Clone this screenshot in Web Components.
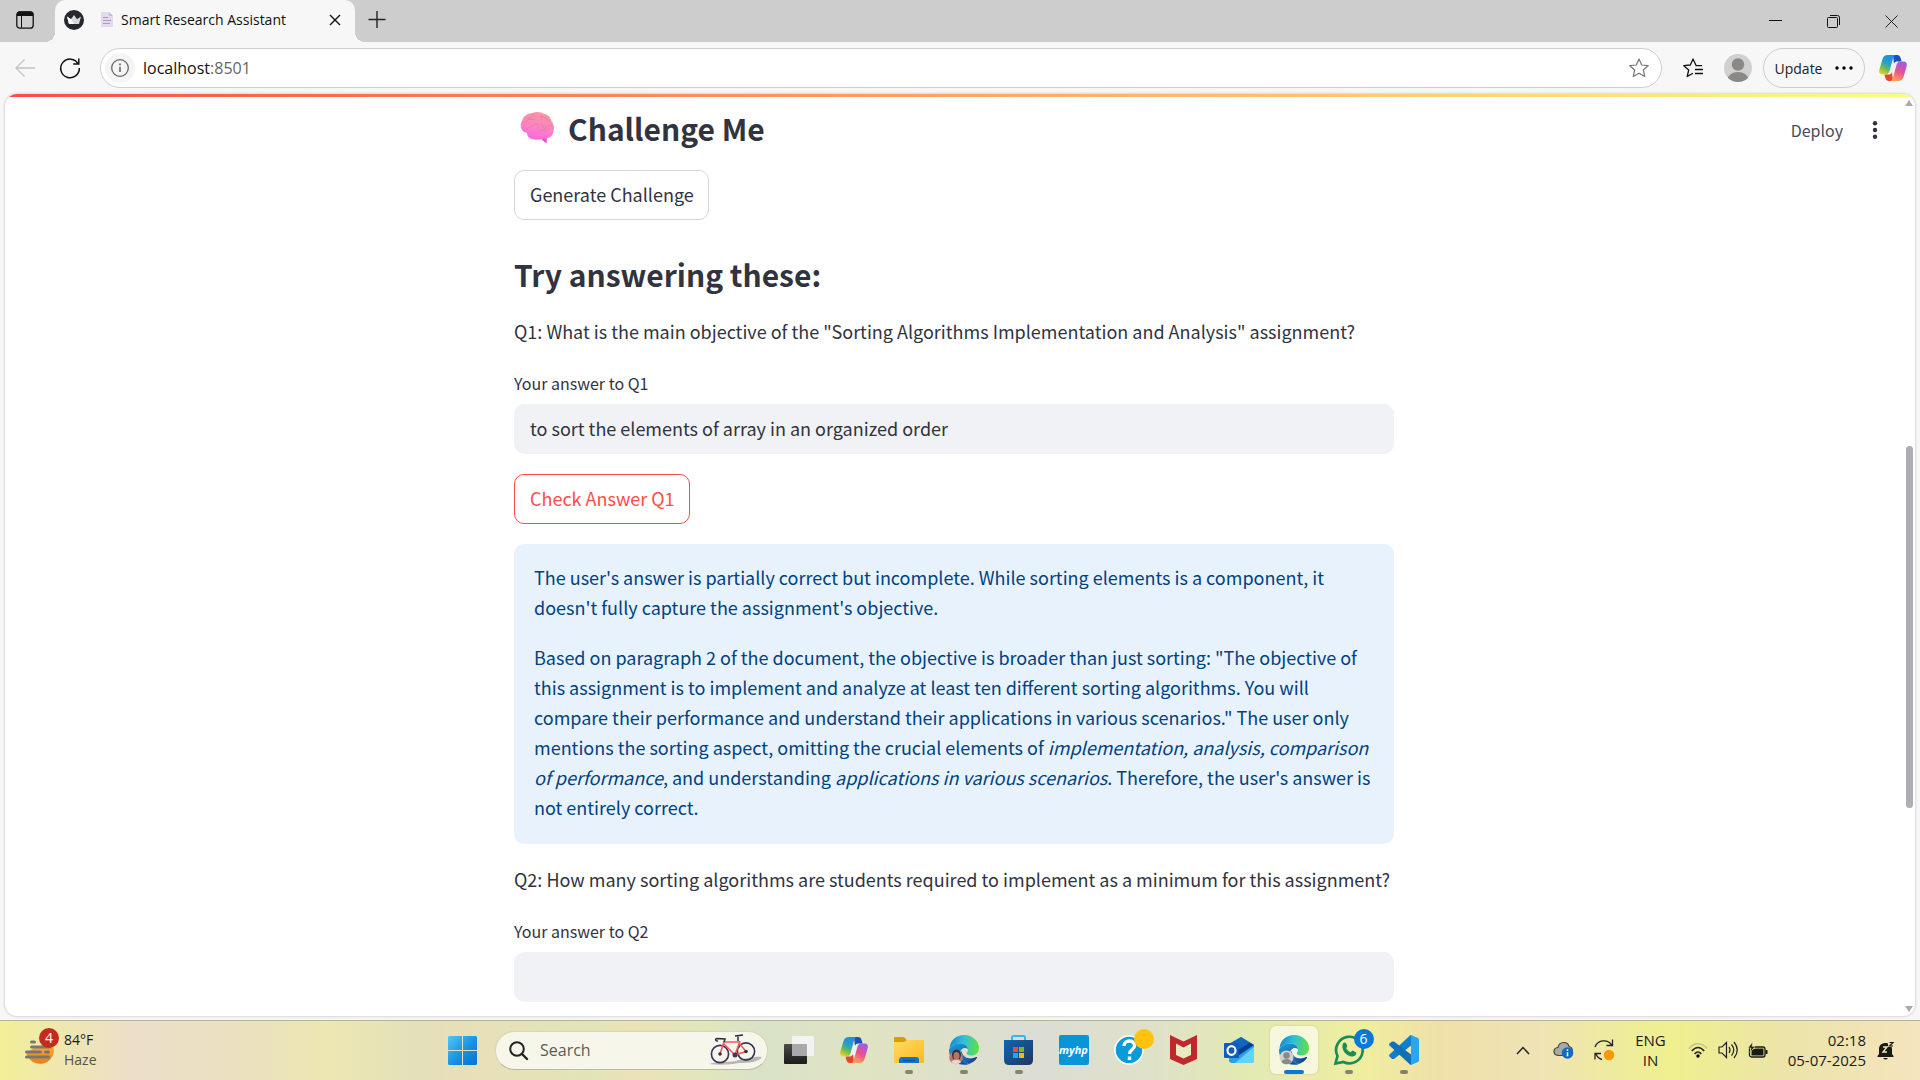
<!DOCTYPE html>
<html lang="en">
<head>
<meta charset="utf-8">
<title>Smart Research Assistant</title>
<style>
  html, body { height: 100%; margin: 0; }
  body { font-family: "Open Sans", "Noto Sans", sans-serif; font-size: 14px; color: #1b1b1b; overflow: hidden; }
</style>
</head>
<body>
<desk-top></desk-top>

<script>
const define = (name, html, setup) => {
  const template = document.createElement('template');
  template.innerHTML = html;
  customElements.define(name, class extends HTMLElement {
    connectedCallback() {
      if (this.shadowRoot) return;
      const root = this.attachShadow({ mode: 'open' });
      root.append(template.content.cloneNode(true));
      if (setup) setup(this, root);
    }
  });
};

const edgeArt = `
  <defs>
    <linearGradient id="a" x1="0" y1=".5" x2="1" y2=".6"><stop offset="0" stop-color="#1a86d0"/><stop offset=".45" stop-color="#2fc0d8"/><stop offset="1" stop-color="#62e23c"/></linearGradient>
    <linearGradient id="b" x1="0" y1="0" x2=".4" y2="1"><stop offset="0" stop-color="#1ba0dc"/><stop offset="1" stop-color="#0d55a8"/></linearGradient>
    <linearGradient id="c" x1="0" y1="0" x2="1" y2="0"><stop offset="0" stop-color="#1d78c8"/><stop offset="1" stop-color="#12397c"/></linearGradient>
  </defs>
  <path fill="url(#a)" d="M.5 13C1.5 5 7.500 0 15 0c8.500 0 15 6 15 13 0 5-4 8-8.500 7.500-2.500-.2-3.900-1.200-3.700-2.500C18.200 17 19 16.300 19 14.500c0-3.500-3-6-7.500-6-5 0-9 2-11 4.500z"/>
  <path fill="url(#b)" d="M.3 14C2 10.500 6 8.500 11.500 8.500c4 0 7.500 2.500 7.500 6-1.500-2.700-7.500-2-8 3.500-.3 5 4 10 9 11C12 32 0 27 0 15z"/>
  <path fill="url(#c)" d="M11 18c-.3 5 4 10 9 11 3.500-1.200 6.500-3.600 8-6.200.3-.6-.2-1-.8-.7-5.200 2.400-13.200 1.900-14.400-5.600-1-.5-1.600.5-1.800 1.500z"/>`;

const icons = {
  panel: [18, 18, `<rect x=".8" y=".8" width="16.400" height="16.400" rx="3" fill="none" stroke="#111" stroke-width="1.300"/><path d="M1 5V3a2.500 2.500 0 0 1 2.500-2.500h11A2.500 2.500 0 0 1 17 3v2z" fill="#111"/><path d="M5.500 5v12" stroke="#111"/>`],
  crown: [20, 20, `<circle cx="10" cy="10" r="10" fill="#262730"/><path fill="#d8d8da" d="M3 6.500l4 2.700L10 5l3 4.200 4-2.700-2 7.500H5z"/><path fill="#fff" d="M3 6.500l4 2.700 3 4.800H5z"/>`],
  page: [12, 15, `<path fill="#e3daf0" d="M0 0h8l4 4v11H0z"/><path fill="#c9b8de" d="M8 0l4 4H8z"/><path d="M2 5.500h5M2 8.500h8M2 11.500h7" stroke="#a99bbb"/>`],
  close: [12, 12, `<path d="M1 1l10 10M11 1L1 11" stroke="#111" stroke-width="1.400"/>`],
  plus: [18, 18, `<path d="M9 0v17M.5 8.500h17" stroke="#222" stroke-width="1.400"/>`],
  minimise: [13, 13, `<path d="M0 5.500h13" stroke="#111"/>`],
  restore: [13, 13, `<rect x=".5" y="2.500" width="10" height="10" rx="1" fill="none" stroke="#111"/><path d="M3 .5h7.500a2 2 0 0 1 2 2V10" fill="none" stroke="#111"/>`],
  shut: [13, 13, `<path d="M.5.5l12 12M12.500.5l-12 12" stroke="#222"/>`],
  back: [20, 18, `<path d="M20 9H1M9.500.500L1 9l8.500 8.500" fill="none" stroke="#c4c4c4" stroke-width="1.300"/>`],
  reload: [20, 20, `<path d="M18.200 6A9.300 9.300 0 1 0 19.300 10M18.800.500V6h-5.600" fill="none" stroke="#111" stroke-width="1.500"/>`],
  info: [18, 18, `<circle cx="9" cy="9" r="8.300" fill="none" stroke="#666" stroke-width="1.300"/><path d="M9 7.800V13M9 4.500v1.700" stroke="#666" stroke-width="1.600"/>`],
  star: [20, 20, `<path d="M10 1l2.700 6 6.500.7-4.900 4.300 1.500 6.500L10 15.200l-5.800 3.300 1.500-6.500L.8 7.700 7.300 7z" fill="none" stroke="#777" stroke-width="1.200" stroke-linejoin="round"/>`],
  favourites: [20, 20, `<path d="M19 7.700h-5.800L10 1 7.300 7l-6.500.7 4.900 4.300-1.500 6.500 5.800-3.300M12 11.500h8M12 15.500h8" fill="none" stroke="#111" stroke-width="1.300" stroke-linejoin="round"/>`],
  person: [28, 28, `<clipPath id="p"><circle cx="14" cy="14" r="14"/></clipPath><g clip-path="url(#p)"><path fill="#d2d0ce" d="M0 0h28v28H0z"/><circle cx="14" cy="10.500" r="6.200" fill="#8a8886"/><ellipse cx="14" cy="26" rx="10.500" ry="8" fill="#8a8886"/></g>`],
  dots: [18, 4, `<circle cx="2" cy="2" r="1.700"/><circle cx="9" cy="2" r="1.700"/><circle cx="16" cy="2" r="1.700"/>`],
  kebab: [6, 18, `<g fill="#31333f"><circle cx="3" cy="2.300" r="2.200"/><circle cx="3" cy="9" r="2.200"/><circle cx="3" cy="15.700" r="2.200"/></g>`],
  copilot: [28, 26, `
    <defs><linearGradient id="l" x1=".6" y1="0" x2=".2" y2="1"><stop offset="0" stop-color="#1a8fe8"/><stop offset=".4" stop-color="#2aa0c8"/><stop offset=".68" stop-color="#67bd55"/><stop offset="1" stop-color="#f3d521"/></linearGradient>
    <linearGradient id="r" x1=".7" y1="0" x2=".3" y2="1"><stop offset="0" stop-color="#9b5cf0"/><stop offset=".5" stop-color="#e9508f"/><stop offset="1" stop-color="#ffa15a"/></linearGradient></defs>
    <path fill="#f4f2ee" d="M13 8h4.500L14.500 18H10z"/>
    <path fill="#1c4fc4" d="M14 0h4c2 0 3 1 3.600 3l1 3.500h-4c-2 0-3 .5-3.600 2.500z"/>
    <path fill="#e8442d" d="M14 26h-4c-2 0-3-1-3.600-3l-1-3.500h4c2 0 3-.5 3.600-2.500z"/>
    <path fill="url(#l)" d="M9 0h7.500c-1.500.5-2 1.800-2.500 3.500L10.800 15c-1 3.500-2 4.500-4.300 4.500H4c-3.300 0-4.500-2-3.600-5L3.500 4C4.300 1.300 6 0 9 0z"/>
    <path fill="url(#r)" d="M19 26h-7.500c1.500-.5 2-1.800 2.500-3.500L17.200 11c1-3.500 2-4.500 4.300-4.500H24c3.300 0 4.500 2 3.600 5L24.500 22c-.8 2.700-2.500 4-5.500 4z"/>`],
  brain: [34, 32, `
    <defs><linearGradient id="g" x1=".7" y1="0" x2=".4" y2="1"><stop offset="0" stop-color="#f797a4"/><stop offset=".5" stop-color="#fb86bd"/><stop offset="1" stop-color="#fc68e4"/></linearGradient></defs>
    <path fill="#e850c8" d="M20 24l7 0-.5 7.500C23 29 21 27 20 24z"/>
    <path fill="url(#g)" d="M4 20C0 17 0 12 2 9 3 4 8 1 13 1c3-2 9-1 11 1 4 0 7 4 7.500 7 3 4 3 9 1.500 12-1 4-5 6-9 5.500-3 1.500-9 1.500-12 .5-3-.5-5-3-5-6z"/>
    <g fill="none" stroke="#e57aa8" stroke-width=".9" stroke-linecap="round"><path d="M3 10c3 0 5-1 6-4 2 0 4-1 4-4M9 6c1 2 3 2 5 1M6 19c1-3 4-4 7-5 1-2 4-3 6-1M22 8l-1-4c3 1 6 2 7 5M20 19c3 0 5-2 6-4s4-2 6-1M22 12c1 2 1 3 1 3s3 3 3 5"/></g>`],
  haze: [30, 26, `
    <defs><linearGradient id="h" x1="0" y1="0" x2="0" y2="1"><stop offset="0" stop-color="#fbb62f"/><stop offset="1" stop-color="#ef7a1a"/></linearGradient></defs>
    <path fill="url(#h)" d="M8 9.500L24 4c3 1 5 4 5 7a14 14 0 0 1-27.500 3.500z"/><g stroke="#777" stroke-width="3" stroke-linecap="round"><path d="M6.500 3h3M6.500 8h18M1.500 13h14M20.500 13h3M1.500 18h22"/></g>`],
  start: [29, 29, `
    <defs><linearGradient id="w" x1="0" y1="0" x2="1" y2="1"><stop offset="0" stop-color="#4cc9fb"/><stop offset=".55" stop-color="#1690e2"/><stop offset="1" stop-color="#0573d2"/></linearGradient></defs>
    <path fill="url(#w)" d="M1 0h13v14H0V1zM15 0h13l1 1v13H15zM0 15h14v14H1l-1-1zM15 15h14v13l-1 1H15z"/>`],
  search: [19, 19, `<circle cx="8" cy="8" r="6.800" fill="none" stroke="#222" stroke-width="2"/><path d="M13 13l5 5" stroke="#222" stroke-width="2.400" stroke-linecap="round"/>`],
  bike: [54, 32, `
    <path fill="#a9a9a3" opacity=".8" d="M0 30c10-3 22-1 30-4 8-2 16-4 23-3-3 5-13 6-23 6-10 2-20 2-30 1z"/>
    <g fill="none"><g stroke="#34345c" stroke-width="1.600"><circle cx="11" cy="20" r="8.600"/><circle cx="37" cy="17.500" r="8.600"/></g>
    <g stroke="#ee5a62" stroke-width="1.600"><path d="M11 20l4-12M14 8h16M14 9l12 12 5-14M26 21l11-3.500-7-8.500"/></g>
    <path d="M29 7V2M26 2l8-1M15 8l1-3-8-.5c-2 0-2 3 1 2.500" stroke="#2b2b44" stroke-width="1.500"/><circle cx="26" cy="21" r="2.500" fill="#463a5a"/></g>
    <circle cx="11" cy="20" r="1.800" fill="#333"/><circle cx="37" cy="17.500" r="1.800" fill="#333"/>`],
  taskview: [30, 28, `
    <defs><linearGradient id="d" x1="0" y1="0" x2="0" y2="1"><stop offset="0" stop-color="#4b4b49"/><stop offset="1" stop-color="#1b1b1b"/></linearGradient></defs>
    <rect y="8" width="23" height="20" rx="1" fill="url(#d)"/><rect x="8" width="22" height="20" rx="1" fill="#f4f4f6" opacity=".92"/><path fill="#a9a9a9" d="M8 8h15v12H8z"/>`],
  folder: [30, 28, `
    <defs><linearGradient id="f" x1="0" y1="0" x2="1" y2="1"><stop offset="0" stop-color="#ffdb67"/><stop offset="1" stop-color="#fcb91c"/></linearGradient></defs>
    <path fill="#dc9a08" d="M0 2q0-1 1-1h8q1.500 0 2.500 1.500L13 5v5H0z"/><path fill="url(#f)" d="M0 6h10l3-2h17v22q0 1-1 1H1q-1 0-1-1z"/><path fill="#1173cc" d="M5 27v-3q0-3 3-3h14q3 0 3 3v3z"/><path d="M9 24.500h12" stroke="#064e94"/>`],
  edgephoto: [30, 30, edgeArt + `<circle cx="7" cy="22.500" r="6.800" fill="#c2727a"/><path fill="#35303a" d="M3 20c0-7 9-7 9 0l-1 4H4z"/><ellipse cx="7.500" cy="21" rx="3" ry="4" fill="#b07a5c"/><path fill="#e5d7cb" d="M2 27c3-3 8-3 10 0-3 3-7 3-10 0z"/>`],
  edgeuser: [30, 30, edgeArt + `<circle cx="7.500" cy="22.500" r="7" fill="#d2d0ce"/><circle cx="7.500" cy="20.500" r="3.200" fill="#8a8886"/><path fill="#8a8886" d="M2.500 27c1-4 9-4 10 0-3 3-7 3-10 0z"/>`],
  store: [29, 30, `
    <defs><linearGradient id="s" x1="0" y1="0" x2="1" y2="1"><stop offset="0" stop-color="#0c66b8"/><stop offset="1" stop-color="#22365c"/></linearGradient></defs>
    <path d="M8 6V2.500Q8 1 9.500 1h10Q21 1 21 2.500V6" fill="none" stroke="#36b8ee" stroke-width="2"/><path fill="url(#s)" d="M0 5h29v20q0 5-5 5H5q-5 0-5-5z"/>
    <path fill="#f25022" d="M9 12h5v5H9z"/><path fill="#7fba00" d="M15 12h5v5h-5z"/><path fill="#22a6f0" d="M9 18h5v5H9z"/><path fill="#ffb900" d="M15 18h5v5h-5z"/>`],
  help: [30, 30, `<circle cx="15" cy="15" r="14" fill="#0d9ad8" stroke="#fff" stroke-width="1.500"/><path d="M10 11c0-6.500 10.500-6.500 10.500-.5 0 4-5 4-5 8.500M15.500 21.500v3.500" fill="none" stroke="#fff" stroke-width="3.400"/>`],
  mcafee: [27, 30, `<path fill="#c1272d" d="M0 0l13.500 6.500L27 0v24l-13.500 6L0 24z"/><path fill="#e9ecc0" d="M6 8.500l7.500 4 7.500-4V20l-7.500 3.500L6 20z"/>`],
  outlook: [30, 28, `
    <path fill="#2aa0ea" d="M5 8l12-7 13 8v15q0 3-3 3H8q-3 0-3-3z"/><path fill="#1366c0" d="M5 8l12-7 9 5.500L10 17z"/><path fill="#0a3f8f" d="M30 9L14 20l-2-5 14-8.500z"/><path fill="#61d4fa" d="M30 11v13q0 3-3 3H11z"/><rect y="7" width="15" height="15" rx="1" fill="#0d5dbd"/><ellipse cx="7.500" cy="14.500" rx="4" ry="4.300" fill="none" stroke="#fff" stroke-width="2.200"/>`],
  whatsapp: [30, 30, `<path d="M1.500 28.500l2-7.500A13.300 13.300 0 1 1 9.500 27z" fill="none" stroke="#1f8a55" stroke-width="2.700"/><path fill="#1f8a55" d="M9 8.500c1-1.500 2.500-1.500 3.200 0l1.200 2.800-1.200 2c1 2 2.400 3.200 4.400 4l1.900-1.800 3.300 1.700c1 .8.500 2.600-1.200 3.800C14.500 23.500 6 15.500 9 8.500z"/>`],
  vscode: [30, 30, `<path fill="#0f7fc9" d="M22 0l2 9L5 24l-2 0-2.500-2.500q-1-1 0-2L21 .5z"/><path fill="#1070b8" d="M22 30l2-9L5 6.500H3L.5 8.500q-1 1 0 2L21 29.500z"/><path fill="#2aa5f0" d="M22 0l7 3q1 .5 1 1.500v21q0 1-1 1.500l-7 3z"/>`],
  chevron: [14, 9, `<path d="M1 8l6-6.500L13 8" fill="none" stroke="#222" stroke-width="1.500"/>`],
  cloud: [21, 18, `<path d="M6 14.500c-6.500 0-6.500-7.500-1-8C6 0 15 0 16 5.500c5 1 4 9-1 9z" fill="#a9a9a9" stroke="#444" stroke-width="1.200"/><circle cx="14.500" cy="12" r="5.800" fill="#0f6cbd"/><path d="M14.500 11.300v4M14.500 8.200V10" stroke="#fff" stroke-width="1.500"/>`],
  sync: [22, 22, `<path d="M2 8A9.500 9.500 0 0 1 19 6.500M19.500.5v6h-6M9 20.500A9 9 0 0 1 3 15M2 20.500v-6h6" fill="none" stroke="#222" stroke-width="1.300"/><circle cx="16" cy="16" r="5.200" fill="#ff9800"/>`],
  wifi: [20, 16, `<path d="M1 6.500c5-6.500 13-6.500 18 0" fill="none" stroke="#c6c389" stroke-width="1.500"/><path d="M3.800 9c4-4.800 8.400-4.800 12.400 0M6.600 12c2.300-2.600 4.500-2.600 6.800 0" fill="none" stroke="#222" stroke-width="1.500"/><circle cx="10" cy="14" r="1.700"/>`],
  volume: [20, 18, `<path d="M1 6h3l4.500-4.500v15L4 12H1zM11 6q2 3 0 6M13.500 3.500q4.500 5.500 0 11M16 1q6.500 8 0 16" fill="none" stroke="#222" stroke-width="1.200"/>`],
  battery: [20, 16, `<rect x="1.500" y="5" width="15.500" height="10" rx="2" fill="none" stroke="#1a1a14" stroke-width="1.300"/><path fill="#1a1a14" d="M3.500 13.500V8l4-1.500h8v7zM17.500 8h2v4h-2z"/><path fill="#1a1a14" stroke="#e9e59a" stroke-width=".6" d="M4.500 0L0 6h3L2 10.500 7 4.500H4z"/>`],
  bell: [17, 19, `<path fill="#1a1a14" d="M2 8c0-8 13-8 13 0v5l1.500 2v1H.5v-1L2 13zM6 17h5q-2.500 3-5 0z"/><path d="M6 6h4l-4 5h4" fill="none" stroke="#efe4b8" stroke-width="1.400"/><path fill="#efe4b8" d="M11 0h6v6h-6z"/><path d="M12.500 1.500H16l-3.500 3.500H16" fill="none" stroke="#1a1a14" stroke-width="1.200"/>`]
};

define('ui-icon', `
  <style>:host { display: block; flex: none; } svg { display: block; overflow: visible; }</style>`,
  (host, root) => {
    const [w, h, art] = icons[host.getAttribute('name')];
    root.innerHTML += `<svg width="${w}" height="${h}" viewBox="0 0 ${w} ${h}" aria-hidden="true">${art}</svg>`;
  });

define('tab-strip', `
  <style>
    :host { display: flex; height: 42px; background: #cdcdcd; align-items: stretch; }
    button { border: 0; background: none; padding: 0; display: flex; align-items: center; justify-content: center; }
    .panel { width: 50px; padding-bottom: 2px; }
    .tab { display: flex; align-items: center; box-sizing: border-box; width: 300px; margin-left: 5px; padding: 0 14px 3px 9px; background: #f7f7f7; border-radius: 10px 10px 0 0; position: relative; }
    .tab::before, .tab::after { content: ""; position: absolute; bottom: 0; width: 10px; height: 10px; }
    .tab::before { right: 100%; background: radial-gradient(circle at 0 0, transparent 10px, #f7f7f7 10px); }
    .tab::after { left: 100%; background: radial-gradient(circle at 100% 0, transparent 10px, #f7f7f7 10px); }
    .page { margin-left: 17px; }
    .title { flex: 1; margin-left: 8px; white-space: nowrap; color: #111; }
    .new { width: 44px; padding-bottom: 2px; }
    .window { display: flex; margin-left: auto; }
    .window button { width: 58px; }
  </style>
  <button class="panel" aria-label="Tab actions"><ui-icon name="panel"></ui-icon></button>
  <div class="tab">
    <ui-icon name="crown"></ui-icon><ui-icon class="page" name="page"></ui-icon>
    <span class="title"><slot></slot></span>
    <button aria-label="Close tab"><ui-icon name="close"></ui-icon></button>
  </div>
  <button class="new" aria-label="New tab"><ui-icon name="plus"></ui-icon></button>
  <div class="window">
    <button aria-label="Minimise"><ui-icon name="minimise"></ui-icon></button>
    <button aria-label="Restore"><ui-icon name="restore"></ui-icon></button>
    <button aria-label="Close"><ui-icon name="shut"></ui-icon></button>
  </div>`);

define('address-bar', `
  <style>
    :host { display: flex; align-items: center; height: 52px; box-sizing: border-box; padding: 0 13px 0 15px; background: #f7f7f7; }
    button { border: 0; background: none; padding: 0; display: flex; align-items: center; justify-content: center; font: inherit; color: #222; }
    .reload { margin: 0 20px 0 25px; }
    .field { display: flex; align-items: center; flex: 1; height: 40px; box-sizing: border-box; border: 1px solid #cfcfcf; border-radius: 20px; background: #fff; padding: 0 12px 0 4px; }
    .info { width: 30px; height: 30px; border-radius: 50%; background: #f4f4f4; }
    .url { flex: 1; margin-left: 8px; font-size: 16px; line-height: 24px; color: #111; }
    .url span { color: #666; }
    .favourites { margin: 0 21px; }
    .update { width: 102px; height: 40px; box-sizing: border-box; border: 1px solid #cdcdcd; border-radius: 20px; gap: 13px; margin: 0 14px 0 11px; }
  </style>
  <button aria-label="Back"><ui-icon name="back"></ui-icon></button>
  <button class="reload" aria-label="Reload"><ui-icon name="reload"></ui-icon></button>
  <div class="field">
    <button class="info" aria-label="Site information"><ui-icon name="info"></ui-icon></button>
    <div class="url">localhost<span>:8501</span></div>
    <button aria-label="Add to favourites"><ui-icon name="star"></ui-icon></button>
  </div>
  <button class="favourites" aria-label="Favourites"><ui-icon name="favourites"></ui-icon></button>
  <button aria-label="Profile"><ui-icon name="person"></ui-icon></button>
  <button class="update">Update <ui-icon name="dots"></ui-icon></button>
  <button aria-label="Copilot"><ui-icon name="copilot"></ui-icon></button>`);

define('scroll-bar', `
  <style>
    :host { display: flex; flex-direction: column; align-items: center; width: 12px; box-sizing: border-box; padding: 6px 0 4px; }
    .up, .down { border: 4px solid transparent; }
    .up { border-bottom: 6px solid #aaa; border-top: 0; }
    .down { border-top: 6px solid #aaa; border-bottom: 0; }
    .before { flex: 340; } .thumb { flex: 362; width: 7px; border-radius: 4px; background: #adadb3; } .after { flex: 198; }
  </style>
  <div class="up"></div><div class="before"></div><div class="thumb"></div><div class="after"></div><div class="down"></div>`);

define('action-button', `
  <style>
    :host { display: block; }
    button { font: inherit; line-height: 30px; height: 50px; padding: 0 14px 2px 15px; border: 1px solid #d6d6d9; border-radius: 10px; background: #fff; color: inherit; }
    :host([active]) button { border-color: #ff4b4b; color: #ff4b4b; }
  </style>
  <button><slot></slot></button>`);

define('section-title', `
  <style>
    :host { display: block; }
    h3 { display: flex; align-items: center; gap: 14px; margin: 0; padding-bottom: 1px; font-size: 30px; line-height: 42px; font-weight: 700; }
    ::slotted(ui-icon) { margin-left: 6px; }
  </style>
  <h3><slot name="icon"></slot><span><slot></slot></span></h3>`);

define('answer-field', `
  <style>
    :host { display: flex; flex-direction: column; gap: 6px; }
    label { font-size: 16px; line-height: 30px; }
    input { font: inherit; color: inherit; height: 50px; box-sizing: border-box; width: 100%; border: 0; border-radius: 10px; background: #f0f2f6; padding: 0 16px 2px; }
  </style>
  <label for="answer"></label><input id="answer" type="text">`,
  (host, root) => {
    root.querySelector('label').textContent = host.getAttribute('label');
    root.querySelector('input').value = host.getAttribute('value') || '';
  });

define('info-alert', `
  <style>
    :host { display: flex; flex-direction: column; gap: 20px; padding: 18px 20px 22px; border-radius: 10px; background: #e8f2fc; color: #004280; }
    ::slotted(p) { margin: 0; }
  </style>
  <slot></slot>`);

define('challenge-page', `
  <style>
    :host { display: flex; position: relative; flex: 1; min-height: 0; margin: 0 5px 4px; overflow: hidden; background: #fff; border-radius: 12px; box-shadow: 0 0 3px rgba(0,0,0,.25);
      font-family: "Noto Sans CJK SC", "Noto Sans", sans-serif; font-size: 18px; line-height: 30px; color: #31333f; }
    .accent { position: absolute; inset: 0 0 auto; height: 3px; background: linear-gradient(90deg, #ff4b4b, #fffd80); }
    .tools { position: absolute; top: 21px; right: 37px; display: flex; align-items: center; gap: 29px; }
    .tools button { border: 0; background: none; padding: 0; font: inherit; font-size: 16px; color: #4a4c57; }
    main { flex: 1; display: flex; flex-direction: column; align-items: center; overflow: hidden; }
    .column { width: 880px; display: flex; flex-direction: column; flex: none; gap: 20px; padding-top: 13px; }
    p { margin: 0; }
    .lead { margin-top: 13px; }
    .question { display: flex; flex-direction: column; gap: 22px; }
  </style>
  <div class="accent"></div>
  <main>
    <div class="column">
      <section-title><ui-icon slot="icon" name="brain"></ui-icon>Challenge Me</section-title>
      <action-button>Generate Challenge</action-button>
      <section-title class="lead">Try answering these:</section-title>
      <div class="question">
        <p>Q1: What is the main objective of the "Sorting Algorithms Implementation and Analysis" assignment?</p>
        <answer-field label="Your answer to Q1" value="to sort the elements of array in an organized order"></answer-field>
      </div>
      <action-button active>Check Answer Q1</action-button>
      <info-alert>
        <p>The user's answer is partially correct but incomplete. While sorting elements is a component, it doesn't fully capture the assignment's objective.</p>
        <p>Based on paragraph 2 of the document, the objective is broader than just sorting: "The objective of this assignment is to implement and analyze at least ten different sorting algorithms. You will compare their performance and understand their applications in various scenarios." The user only mentions the sorting aspect, omitting the crucial elements of <em>implementation, analysis, comparison of performance</em>, and understanding <em>applications in various scenarios</em>. Therefore, the user's answer is not entirely correct.</p>
      </info-alert>
      <div class="question">
        <p>Q2: How many sorting algorithms are students required to implement as a minimum for this assignment?</p>
        <answer-field label="Your answer to Q2"></answer-field>
      </div>
    </div>
  </main>
  <div class="tools"><button>Deploy</button><button aria-label="Main menu"><ui-icon name="kebab"></ui-icon></button></div>
  <scroll-bar></scroll-bar>`);

define('task-item', `
  <style>
    :host { display: flex; width: 55px; height: 60px; align-items: center; justify-content: center; }
    button { position: relative; width: 48px; height: 48px; border: 0; border-radius: 6px; padding: 0; background: none; display: flex; align-items: center; justify-content: center; }
    :host([active]) button { background: rgba(255,255,255,.6); box-shadow: 0 0 2px rgba(0,0,0,.2); }
    :host([running]) button::after { content: ""; position: absolute; bottom: 0; left: 20px; width: 8px; height: 4px; border-radius: 2px; background: #85846a; }
    :host([active]) button::after { left: 14px; width: 20px; background: #0a78d8; }
    .badge { position: absolute; top: 3px; right: -1px; width: 20px; height: 20px; border-radius: 50%; background: #0a78d8; color: #fff; font: 14px/20px "Open Sans", sans-serif; text-align: center; }
    .badge:empty { background: #ffc20e; }
    .hp { width: 30px; height: 30px; border-radius: 2px; background: #0a96d6; color: #fff; font: italic 700 11px/30px "Open Sans", sans-serif; }
  </style>
  <button></button>`,
  (host, root) => {
    const button = root.querySelector('button');
    const name = host.getAttribute('icon');
    button.setAttribute('aria-label', name);
    button.innerHTML = name === 'myhp' ? '<span class="hp">myhp</span>' : `<ui-icon name="${name}"></ui-icon>`;
    if (host.hasAttribute('badge')) button.innerHTML += `<span class="badge">${host.getAttribute('badge')}</span>`;
  });

define('system-tray', `
  <style>
    :host { display: flex; align-items: center; justify-content: flex-end; padding-right: 26px; font-size: 15px; line-height: 20px; }
    .lang { text-align: center; margin: 0 22px 0 20px; }
    .cloud { margin: 0 19px 0 23px; }
    .status { display: flex; align-items: center; gap: 10px; margin-right: 20px; }
    .clock { text-align: right; margin-right: 11px; }
  </style>
  <ui-icon name="chevron"></ui-icon>
  <ui-icon class="cloud" name="cloud"></ui-icon>
  <ui-icon name="sync"></ui-icon>
  <div class="lang">ENG<br>IN</div>
  <div class="status"><ui-icon name="wifi"></ui-icon><ui-icon name="volume"></ui-icon><ui-icon name="battery"></ui-icon></div>
  <div class="clock">02:18<br>05-07-2025</div>
  <ui-icon name="bell"></ui-icon>`);

define('weather-widget', `
  <style>
    :host { display: flex; align-items: center; gap: 9px; padding-left: 25px; line-height: 20px; }
    .icon { position: relative; padding-top: 4px; }
    .badge { position: absolute; left: 14px; top: -7px; width: 20px; height: 20px; border-radius: 50%; background: #c42b1c; color: #fff; text-align: center; }
    .sky { color: #55554a; }
  </style>
  <div class="icon"><ui-icon name="haze"></ui-icon><span class="badge">4</span></div>
  <div><div>84°F</div><div class="sky">Haze</div></div>`);

define('search-pill', `
  <style>
    :host { display: flex; align-items: center; box-sizing: border-box; width: 273px; height: 39px; margin: 0 3px 0 5px; padding: 0 4px 0 13px; border-radius: 20px; background: #f6f6ea; border: 1px solid #d5d6b8; border-bottom-color: #b9baa0; }
    input { flex: 1; min-width: 0; border: 0; padding: 0; margin-left: 12px; background: none; outline: 0; font: inherit; font-size: 16px; color: #555; }
    input::placeholder { color: #5c5c56; opacity: 1; }
  </style>
  <ui-icon name="search"></ui-icon>
  <input type="search" placeholder="Search" aria-label="Search">
  <ui-icon name="bike"></ui-icon>`);

define('task-bar', `
  <style>
    :host { display: grid; grid-template-columns: 435fr auto 489fr; height: 60px; box-sizing: border-box; box-shadow: inset 0 1px #b5b497;
      background: linear-gradient(90deg, #f2ef98 0, #ecdeca 7%, #eae1be 13%, #ede7b2 17%, #e3e1ba 21.5%, #e8dfb8 24%, #e2e5b8 31%, #ebe2b6 33%, #e0e6bd 37%, #d9e2c8 39.500%, #e0e4c2 45%, #dcddd4 54%, #dfe1c8 60%, #e2eab2 65%, #efee9f 71%, #f0e0a8 75%, #efe3b5 80%, #eff08f 87%, #ece4a8 93%, #f5e4be 100%); }
    .apps { display: flex; align-items: center; }
  </style>
  <weather-widget></weather-widget>
  <div class="apps">
    <task-item icon="start"></task-item>
    <search-pill></search-pill>
    <task-item icon="taskview"></task-item>
    <task-item icon="copilot"></task-item>
    <task-item icon="folder" running></task-item>
    <task-item icon="edgephoto" running></task-item>
    <task-item icon="store" running></task-item>
    <task-item icon="myhp"></task-item>
    <task-item icon="help" badge=""></task-item>
    <task-item icon="mcafee"></task-item>
    <task-item icon="outlook"></task-item>
    <task-item icon="edgeuser" running active></task-item>
    <task-item icon="whatsapp" running badge="6"></task-item>
    <task-item icon="vscode" running></task-item>
  </div>
  <system-tray></system-tray>`);

define('desk-top', `
  <style>:host { display: flex; flex-direction: column; height: 100vh; background: #f7f7f7; }</style>
  <tab-strip>Smart Research Assistant</tab-strip>
  <address-bar></address-bar>
  <challenge-page></challenge-page>
  <task-bar></task-bar>`);
</script>
</body>
</html>
